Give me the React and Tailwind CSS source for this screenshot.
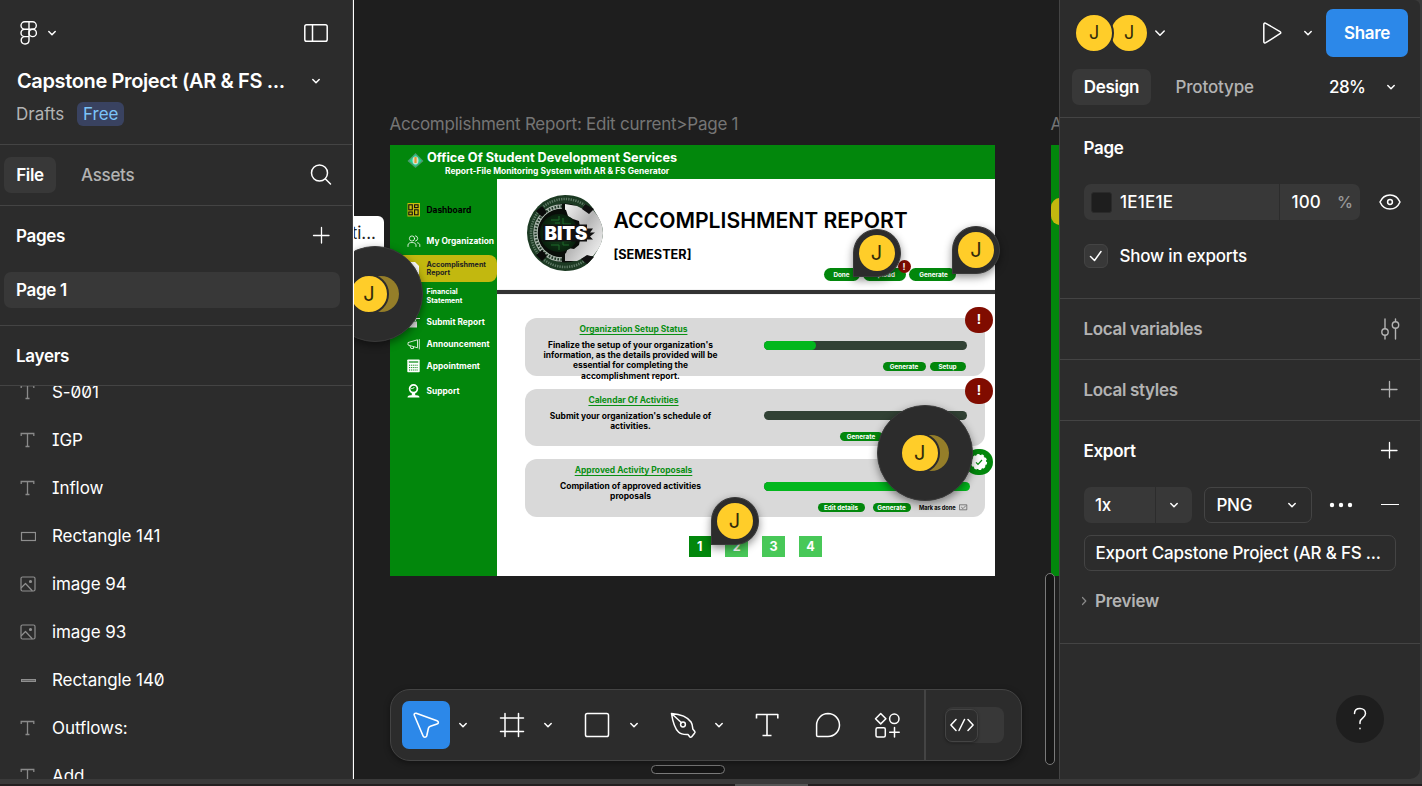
import React from "react";

const Svg = ({ w = 24, h = 24, sw = 1.5, className = "", children }) => (
  <svg
    width={w}
    height={h}
    viewBox={`0 0 ${w} ${h}`}
    fill="none"
    stroke="currentColor"
    strokeWidth={sw}
    strokeLinecap="round"
    strokeLinejoin="round"
    className={`shrink-0 ${className}`}
  >
    {children}
  </svg>
);

const Chevron = ({ className = "" }) => (
  <Svg w={10} h={8} className={className}>
    <path d="M1.8 2.5 5 5.7 8.2 2.5" />
  </Svg>
);

const Plus = ({ className = "" }) => (
  <Svg w={18} h={18} sw={1.3} className={`-mt-[2px] ${className}`}>
    <path d="M9.500 1.500v15.500M1.500 9.500h15.500" />
  </Svg>
);

const TextIcon = () => (
  <Svg w={16} h={16} sw={1.3} className="text-[#8a8a8a]">
    <path d="M1.2 4V1.5h12.6V4M7.5 1.5v13M5.5 14.5h4" strokeLinecap="butt" strokeLinejoin="miter" />
  </Svg>
);

const RectIcon = () => (
  <Svg w={16} h={16} sw={1.2} className="text-[#8f8f8f]">
    <rect x="1.5" y="4.5" width="14" height="8" strokeLinejoin="miter" />
  </Svg>
);

const LineIcon = () => (
  <Svg w={16} h={16} sw={1} className="text-[#8f8f8f]">
    <rect x="1.5" y="7.5" width="14" height="2" fill="#666" strokeLinejoin="miter" />
  </Svg>
);

const ImageIcon = () => (
  <Svg w={16} h={16} sw={1.2} className="text-[#8f8f8f]">
    <rect x="1" y="1" width="14" height="14" rx="1.5" />
    <path d="m1.5 11.5 4-4 6.5 7" />
    <circle cx="10.5" cy="5.5" r="1" fill="currentColor" />
  </Svg>
);

const layers = [
  ["S-001", TextIcon],
  ["IGP", TextIcon],
  ["Inflow", TextIcon],
  ["Rectangle 141", RectIcon],
  ["image 94", ImageIcon],
  ["image 93", ImageIcon],
  ["Rectangle 140", LineIcon],
  ["Outflows:", TextIcon],
  ["Add", TextIcon],
];

function LeftPanel() {
  return (
    <aside className="flex h-full w-[354px] shrink-0 flex-col overflow-hidden border-r border-white bg-[#2c2c2c] text-[17px] leading-[26px] text-white">
      <div className="flex h-full w-[353px] flex-col border-r border-[#444]">
        <div className="flex h-[145px] shrink-0 flex-col border-b border-[#444]">
          <div className="mt-5 flex h-[26px] items-center pl-5 pr-6">
            <Svg w={18} h={26} sw={1.4}>
              <path d="M9 1.800H4.700a3.700 3.700 0 0 0 0 7.400H9zM9 1.800h3.600a3.700 3.700 0 0 1 0 7.400H9zM9 9.200H4.700a3.700 3.700 0 0 0 0 7.400H9zM9 16.600v3.700a3.900 3.700 0 1 1-4.300-3.700z" />
              <circle cx="12.700" cy="12.900" r="3.700" />
            </Svg>
            <Chevron className="ml-[9px]" />
            <Svg w={24} h={18} className="ml-auto">
              <rect x="0.8" y="0.8" width="22.4" height="16.4" rx="1.8" />
              <path d="M8.5 1v16" />
            </Svg>
          </div>
          <div className="mt-[20px] flex h-[30px] items-center pl-[17px] pr-[31px]">
            <span className="whitespace-nowrap text-[20px] font-semibold leading-[30px] tracking-[-0.37px]">Capstone Project (AR &amp; FS ...</span>
            <Chevron className="ml-auto" />
          </div>
          <div className="mt-[6px] flex h-6 items-center pl-4">
            <span className="text-[#b3b3b3]">Drafts</span>
            <span className="ml-[13px] flex h-6 w-[47px] items-center justify-center rounded-[6px] bg-[#394260] text-[#7cc4f8]">Free</span>
          </div>
        </div>
        <div className="flex h-[61px] shrink-0 items-center border-b border-[#444] pl-1 pr-5 font-semibold tracking-[-0.3px]">
          <span className="flex h-9 w-[52px] items-center justify-center rounded-[7px] bg-[#383838]">File</span>
          <span className="ml-[25px] font-medium text-[#b3b3b3]">Assets</span>
          <Svg w={22} h={22} className="ml-auto">
            <circle cx="9.5" cy="9" r="8" />
            <path d="m15.5 15 5 5" />
          </Svg>
        </div>
        <div className="flex h-[120px] shrink-0 flex-col border-b border-[#444] font-semibold tracking-[-0.3px]">
          <div className="flex h-[60px] items-center justify-between pl-4 pr-[22px]">
            <span>Pages</span>
            <Plus />
          </div>
          <div className="ml-1 mt-[6px] flex h-9 w-[336px] items-center rounded-[7px] bg-[#383838] pl-3">Page 1</div>
        </div>
        <div className="flex h-[60px] shrink-0 items-center border-b border-[#444] pl-4 pt-px font-semibold tracking-[-0.3px]">Layers</div>
        <div className="flex min-h-0 flex-1 flex-col overflow-hidden [font-feature-settings:'cv08','zero']">
          <div className="-mt-[18px] flex flex-col">
            {layers.map(([name, Icon]) => (
              <div key={name} className="flex h-12 shrink-0 items-center pl-5">
                <Icon />
                <span className="ml-4 tracking-[-0.07px]">{name}</span>
              </div>
            ))}
          </div>
        </div>
      </div>
    </aside>
  );
}

function BitsLogo() {
  return (
    <svg width="76" height="76" viewBox="0 0 76 76" className="shrink-0">
      <defs>
        <linearGradient id="steel" x1="0" y1="0" x2="1" y2="1">
          <stop offset="0" stopColor="#f4f4f4" />
          <stop offset="0.45" stopColor="#b4b4b4" />
          <stop offset="0.7" stopColor="#d8d8d8" />
          <stop offset="1" stopColor="#fafafa" />
        </linearGradient>
        <radialGradient id="core">
          <stop offset="0" stopColor="#174a1f" />
          <stop offset="1" stopColor="#08200d" />
        </radialGradient>
      </defs>
      <path d="M38 0A38 38 0 0 0 38 76Q56 76 65 64L70 56Q76 46 76 38T70 20L65 12Q56 0 38 0z" fill="#1c3a23" />
      <circle cx="38" cy="38" r="34" fill="none" stroke="#8ba391" strokeWidth="2.6" strokeDasharray="1.3 1.1" opacity="0.6" />
      <circle cx="38" cy="38" r="29.5" fill="#0a0f0b" />
      <path d="M38 9 50 11 60 16 66 15Q76 26 76 38T66 61L60 61 50 66 38 66Z" fill="url(#steel)" />
      <path d="M58 9 67 14 62 19 55 14ZM60 60 67 62 60 69 54 64Z" fill="#101010" />
      <path d="M35 11.500a26.500 26.500 0 0 0 0 53" fill="none" stroke="#aab5ac" strokeWidth="4.500" />
      <path d="M35 11.500a26.500 26.500 0 0 0 0 53" fill="none" stroke="#1d3524" strokeWidth="2.400" strokeDasharray="1.6 1.4" />
      <path d="M36 14a24 24 0 0 0-2 48l5-4 2-5 6 1 5-4 1-5 6-3V34l-6-2-1-6-6-2-5-3-2-6z" fill="#090d09" />
      <circle cx="32" cy="38" r="19" fill="url(#core)" />
      <path d="M24 25h8v-4m4 2v6h8m-20 21h8v5m4-5v-4h8M28 28h5M36 50h6" fill="none" stroke="#1e6a2b" strokeWidth="1" />
      <path d="m9 16 6-5 5 6-5 5zM9 60l6-5 5 6-5 5z" fill="#0a0a0a" />
      <path d="M16 29.500h44v4h6l-3 4h5l-5 4 3 3h-6v2H16z" fill="#111" />
      <text x="17.500" y="44.800" fontFamily="Inter, sans-serif" fontWeight="900" fontSize="18.500" textLength="43" lengthAdjust="spacingAndGlyphs" fill="#fff">
        BITS
      </text>
    </svg>
  );
}

const OrgIcon = () => (
  <Svg w={14} h={14} sw={0.8}>
    <circle cx="5" cy="4.5" r="2.6" />
    <path d="M1 12.5V11c0-1.5 1.5-2.5 4-2.5S9 9.500 9 11v1.500M8.500 1.800a2.700 2.700 0 0 1 0 5.300M10.500 8.800c1.500.3 2.300 1.200 2.300 2.200v1.500" />
  </Svg>
);
const DashIcon = () => (
  <svg width="13" height="14" viewBox="0 0 13 14" className="shrink-0">
    <rect width="12.500" height="13.500" x="0.500" fill="#c9bd0d" />
    <g fill="none" stroke="#111" strokeWidth="1.1">
      <rect x="1.800" y="1.800" width="3.500" height="5" />
      <rect x="7.600" y="1.800" width="3.500" height="2.800" />
      <rect x="1.800" y="9" width="3.500" height="2.800" />
      <rect x="7.600" y="6.800" width="3.500" height="5" />
    </g>
  </svg>
);
const PageIcon = () => (
  <svg width="13" height="15" viewBox="0 0 13 15" className="shrink-0">
    <path d="M1 1h7l4 4v9H1z" fill="#fff" />
  </svg>
);
const SubmitIcon = () => (
  <svg width="13" height="14" viewBox="0 0 13 14" className="shrink-0">
    <path d="M1 6.500h9v6H1z" fill="#e8e8e8" />
    <path d="m8 6 1-2.500h4" stroke="#fff" strokeWidth="1.100" fill="none" />
  </svg>
);
const HornIcon = () => (
  <Svg w={13} h={12} sw={0.8}>
    <path d="M1 5v2l9.500 2.800V2.200zM3 8l1 2.500h2.500V9M12.300 1.500v9.500" />
  </Svg>
);
const CalcIcon = () => (
  <svg width="13" height="14" viewBox="0 0 13 14" className="shrink-0">
    <rect x="0.300" y="0.500" width="12.400" height="12.800" rx="0.800" fill="#fff" />
    <path d="M1.800 3h9.400" stroke="#02870c" strokeWidth="1.200" />
    <path d="M2 6.200h9M2 8.600h9M2 11h9" stroke="#02870c" strokeWidth="1" strokeDasharray="1.200 0.900" />
  </svg>
);
const SupportIcon = () => (
  <svg width="13" height="14" viewBox="0 0 13 14" className="shrink-0">
    <circle cx="6.500" cy="4.800" r="3.900" fill="none" stroke="#fff" strokeWidth="1.700" />
    <path d="M4.200 4.600c1.800 0 2.600-.6 3.400-1.600" stroke="#fff" strokeWidth="0.900" fill="none" />
    <path d="M4.800 8.500h3.400v3H4.800z" fill="#fff" />
    <path d="M0.500 13.500c0-2 2-2.600 6-2.600s6 .6 6 2.600z" fill="#fff" />
  </svg>
);

const nav = [
  { t: ["Dashboard"], icon: DashIcon, cls: "mt-[20.500px] h-[21px] text-black text-[8.4px]" },
  { t: ["My Organization"], icon: OrgIcon, cls: "mt-[10px] h-[21px] text-[8.4px]" },
  { t: ["Accomplishment", "Report"], icon: PageIcon, cls: "mt-[3.500px] h-[27px] bg-[#c2b80f] rounded-r-[8px] text-[#222] text-[7.2px]" },
  { t: ["Financial", "Statement"], icon: PageIcon, cls: "mt-[4px] h-[20px] text-[7.1px]" },
  { t: ["Submit Report"], icon: SubmitIcon, cls: "mt-[5.500px] h-[20px] text-[8.4px]" },
  { t: ["Announcement"], icon: HornIcon, cls: "mt-[2px] h-[20px] text-[8.4px]" },
  { t: ["Appointment"], icon: CalcIcon, cls: "mt-[2px] h-[20px] text-[8.4px]" },
  { t: ["Support"], icon: SupportIcon, cls: "mt-[5px] h-[20px] text-[8.4px]" },
];

const Pill = ({ className = "h-[9px]", children }) => (
  <span className={`flex items-center justify-center rounded-full bg-[#02870c] text-[6.3px] font-bold leading-[10px] text-white ${className}`}>{children}</span>
);

const Alert = () => (
  <span className="absolute -right-[8px] -top-[11px] flex h-[26px] w-[28px] items-center justify-center rounded-full bg-[#800c00] text-[13px] font-bold text-white">!</span>
);

function StatusCard({ title, body, fill, badge, className = "", children }) {
  return (
    <div className={`relative ml-[28px] flex h-[57.500px] w-[460px] shrink-0 rounded-[12px] bg-[#d9d9d9] ${className}`}>
      <div className="flex w-[217px] flex-col items-center font-bold">
        <span className="mt-[6px] text-[8.45px] leading-[10px] text-[#0a8f14] underline underline-offset-[1.500px]">{title}</span>
        <div className="-ml-[6px] mt-[6px] flex flex-col items-center text-[8.45px] leading-[10.200px] text-black">
          {body.map((l) => (
            <span key={l} className="whitespace-nowrap">{l}</span>
          ))}
        </div>
      </div>
      <div className="ml-[21.500px] w-[206px] pt-[22.500px]">
        <div className="h-[9px] w-[203px] rounded-full bg-[#314134]">
          <div className={`h-[9px] rounded-full bg-[#02b71d] ${fill}`} />
        </div>
        <div className="mt-[12px] flex items-center">{children}</div>
      </div>
      {badge}
    </div>
  );
}

const pages = [
  ["1", "bg-[#02870c]"],
  ["2", "bg-[#48c858]"],
  ["3", "bg-[#48c858]"],
  ["4", "bg-[#48c858]"],
];

function DesignFrame() {
  return (
    <div className="absolute left-[36px] top-[145px] flex h-[431px] w-[605px] flex-col overflow-hidden whitespace-nowrap bg-white">
      <header className="flex h-[34px] shrink-0 bg-[#02870c] text-white">
        <svg width="17" height="16" viewBox="0 0 17 16" className="ml-[17px] mt-[8px] shrink-0">
          <path d="m8.500 0 8 8-8 7-8-7z" fill="#4d9a70" />
          <path d="m8.500 1.500 6 6.300-6 5.700-6-5.700z" fill="#19d890" />
          <ellipse cx="8.500" cy="7.500" rx="3" ry="4" fill="#cfe0cf" />
          <path d="M8.500 4v6" stroke="#e59a2c" strokeWidth="2.200" />
        </svg>
        <div className="ml-[3px] flex flex-col">
          <span className="mt-[5px] text-[12.680px] font-bold leading-[16px]">Office Of Student Development Services</span>
          <span className="ml-[18px] text-[8.48px] font-bold leading-[11px]">Report-File Monitoring System with AR &amp; FS Generator</span>
        </div>
      </header>
      <div className="flex min-h-0 flex-1">
        <nav className="flex w-[107px] shrink-0 flex-col bg-[#02870c] font-bold text-white">
          {nav.map(({ t, icon: Icon, cls }) => (
            <div key={t[0]} className={`flex shrink-0 items-center pl-[17px] ${cls}`}>
              <span className="flex w-[19.500px] shrink-0">
                <Icon />
              </span>
              <span className="flex flex-col pt-[1.200px] leading-[8.600px]">
                {t.map((x) => (
                  <span key={x}>{x}</span>
                ))}
              </span>
            </div>
          ))}
        </nav>
        <main className="flex min-w-0 flex-1 flex-col">
          <section className="flex h-[111px] shrink-0 pl-[30px] text-black">
            <div className="mt-[16px]">
              <BitsLogo />
            </div>
            <div className="ml-[10.500px] flex flex-col">
              <h1 className="mt-[28px] text-[21.150px] font-semibold leading-[28px]">ACCOMPLISHMENT REPORT</h1>
              <p className="mt-[12px] text-[12.700px] font-bold leading-[16px]">[SEMESTER]</p>
              <div className="ml-[210px] mt-[5px] flex gap-[3px]">
                <Pill className="h-[13px] w-[36px]">Done</Pill>
                <Pill className="relative h-[13px] w-[43px]">
                  Upload
                  <span className="absolute -right-[5px] -top-[8px] flex size-[13px] items-center justify-center rounded-full bg-[#800c00] text-[9px]">!</span>
                </Pill>
                <Pill className="h-[13px] w-[47px] pl-[3px]">Generate</Pill>
              </div>
            </div>
          </section>
          <div className="h-[4px] shrink-0 bg-[#333] shadow-[0_0_1px_#888]" />
          <StatusCard
            className="mt-[24px]"
            title="Organization Setup Status"
            body={["Finalize the setup of your organization's", "information, as the details provided will be", "essential for completing the", "accomplishment report."]}
            fill="w-[52px]"
            badge={<Alert />}
          >
            <Pill className="ml-[119px] h-[9px] w-[43px] pt-[1.500px]">Generate</Pill>
            <Pill className="ml-[4px] h-[9px] w-[36px] pt-[1.500px]">Setup</Pill>
          </StatusCard>
          <StatusCard
            className="mt-[13px]"
            title="Calendar Of Activities"
            body={["Submit your organization's schedule of", "activities."]}
            fill="w-0"
            badge={<Alert />}
          >
            <Pill className="ml-[76px] h-[9px] w-[43px] pt-[1px]">Generate</Pill>
          </StatusCard>
          <StatusCard
            className="mt-[13px]"
            title="Approved Activity Proposals"
            body={["Compilation of approved activities", "proposals"]}
            fill="w-[206px]"
            badge={
              <span className="absolute -right-[8px] -top-[10px] flex h-[26px] w-[28px] items-center justify-center rounded-full bg-[#02870c]">
                <svg width="18" height="18" viewBox="0 0 18 18">
                  <circle cx="9" cy="9" r="7.300" fill="#fff" stroke="#fff" strokeWidth="1.600" strokeDasharray="2.600 1.980" />
                  <path d="m6 9.300 2 2 4-4.300" fill="none" stroke="#02870c" strokeWidth="1.200" />
                </svg>
              </span>
            }
          >
            <Pill className="ml-[54px] h-[9px] w-[47px] pt-[1.500px]">Edit details</Pill>
            <Pill className="ml-[8px] h-[9px] w-[38px] pt-[1.500px]">Generate</Pill>
            <span className="ml-[8.500px] text-[5.700px] font-bold leading-[9px] tracking-[-0.080px] text-black">Mark as done</span>
            <Svg w={9} h={7} sw={0.7} className="ml-[3px] text-[#555]">
              <rect x="0.800" y="0.800" width="7" height="5" />
              <path d="M2.500 3.300 4 4.600 6.500 2" />
            </Svg>
          </StatusCard>
          <div className="ml-[191.500px] mt-[19px] flex gap-[14.700px]">
            {pages.map(([n, bg]) => (
              <span key={n} className={`flex h-[21px] w-[22.300px] items-center justify-center pt-[2px] text-[12.600px] font-bold text-white ${bg}`}>{n}</span>
            ))}
          </div>
        </main>
      </div>
    </div>
  );
}

const CommentPin = ({ className }) => (
  <div className={`absolute flex size-12 items-center justify-center rounded-full rounded-bl-[2px] border border-[#3a3a3a] bg-[#2c2c2c] shadow-[0_3px_8px_rgba(0,0,0,0.45)] ${className}`}>
    <span className="flex size-9 items-center justify-center rounded-full bg-[#ffcd29] text-[20px] text-[#332b0a]">J</span>
  </div>
);

const CommentCluster = ({ className }) => (
  <div className={`absolute flex size-[96px] items-center rounded-full border border-[#3a3a3a] bg-[#2c2c2c] pl-[21.500px] shadow-[0_3px_8px_rgba(0,0,0,0.45)] ${className}`}>
    <span className="z-10 flex size-[40px] shrink-0 items-center justify-center rounded-full border-2 border-[#2c2c2c] bg-[#ffcd29] text-[20px] text-[#332b0a]">J</span>
    <span className="-ml-[26.500px] size-9 shrink-0 rounded-full bg-[#957e29]" />
  </div>
);

function Toolbar() {
  return (
    <div className="absolute left-[36px] top-[689px] flex h-[72px] w-[632px] items-center rounded-[20px] border border-[#444] bg-[#2c2c2c] pl-[11px] text-white shadow-[0_2px_6px_rgba(0,0,0,0.4)]">
      <span className="flex size-12 shrink-0 items-center justify-center rounded-[7px] bg-[#2c88e9]">
        <Svg w={28} h={28} sw={1.6}>
          <path d="M4.200 2.300 25 9.800c1.800.7 1.800 2.800 0 3.300l-6.600 2.200c-1 .4-1.700 1-2 2L14.700 25c-.7 1.600-3 1.600-3.600 0L2.300 4.300C1.800 3 2.900 1.900 4.200 2.300z" />
        </Svg>
      </span>
      <Chevron className="ml-[8px]" />
      <Svg w={26} h={26} className="ml-[31px]">
        <path d="M6 1.500v23M19.500 1.500v23M1.500 6h23M1.500 19.500h23" />
      </Svg>
      <Chevron className="ml-[18px]" />
      <Svg w={26} h={26} className="ml-[31px]">
        <rect x="1.500" y="1.500" width="23" height="23" rx="1.800" />
      </Svg>
      <Chevron className="ml-[19px]" />
      <Svg w={28} h={28} className="ml-[30px]">
        <path d="M2.500 2.500 12.500 11.800M2.500 2.500C9 3 17.500 4.500 22 11c1.500 2.300 1.500 4.500 1.800 7l2 2.500c.5.600 0 1.500-.5 2L22.500 26c-.6.500-1.400.4-1.800-.2L19 23.500c-4 .2-7 0-9.500-2.500C4.500 16 3.500 9 2.500 2.500z" />
        <circle cx="14" cy="13.500" r="2.400" />
      </Svg>
      <Chevron className="ml-[17px]" />
      <Svg w={26} h={26} sw={1.6} className="ml-[30px]">
        <path d="M2.500 6.500v-4h21.300v4M13 2.500v21M8.500 23.500h9" strokeLinecap="butt" />
      </Svg>
      <Svg w={26} h={26} className="ml-[35px]">
        <path d="M13 1.500a11.500 11.500 0 1 1 0 23H2.800a1.200 1.200 0 0 1-1.200-1.200V13A11.500 11.500 0 0 1 13 1.500z" />
      </Svg>
      <Svg w={26} h={26} className="ml-[33px]">
        <path d="m6.700 1.500 5.200 5.200-5.200 5.200-5.200-5.200zM20.500 15.500v9.500M15.700 20.300h9.500" />
        <circle cx="20.300" cy="6.800" r="4.700" />
        <rect x="2" y="15.700" width="9.300" height="9.300" rx="1.500" />
      </Svg>
      <span className="ml-[24px] h-full w-[2px] bg-[#444]" />
      <span className="ml-[19px] flex h-9 w-[59px] items-center rounded-[8px] bg-[#383838]">
        <span className="flex size-[33px] items-center justify-center rounded-[7px] border border-[#444] bg-[#2c2c2c] shadow-[0_1px_3px_rgba(0,0,0,0.4)]">
          <Svg w={24} h={16}>
            <path d="M6 2.500.9 8 6 13.500M18 2.500 23.100 8 18 13.500M14.500 2.500l-5.500 11" />
          </Svg>
        </span>
      </span>
    </div>
  );
}

function Canvas() {
  return (
    <div className="relative h-full min-w-0 flex-1 overflow-hidden bg-[#1e1e1e]">
      <span className="absolute left-[35.500px] top-[113px] whitespace-nowrap text-[17px] leading-[23px] tracking-[-0.245px] text-[#757575]">Accomplishment Report: Edit current&gt;Page 1</span>
      <span className="absolute left-[696.500px] top-[113px] text-[17px] leading-[23px] text-[#757575]">A</span>
      <div className="absolute left-[697px] top-[145px] h-[431px] w-[20px] bg-[#02870c] pt-[53px]">
        <div className="h-[27px] rounded-l-[9px] bg-[#c2b80f]" />
      </div>
      <DesignFrame />
      <div className="absolute -left-[20px] top-[216px] flex h-[40px] w-[50px] items-start justify-end rounded-[6px] bg-white pr-[8px] pt-[6px] text-[17px] leading-[22px] text-[#222]">ti...</div>
      <CommentCluster className="-left-[27.500px] top-[245.500px]" />
      <CommentPin className="left-[498.500px] top-[228.500px]" />
      <CommentPin className="left-[598px] top-[226px]" />
      <CommentPin className="left-[356.500px] top-[497px]" />
      <CommentCluster className="left-[523.300px] top-[404.500px]" />
      <span className="absolute left-[691px] top-[573px] h-[192px] w-[9.500px] rounded-full border-[1px] border-[#7a7a7a] bg-[#151515]" />
      <span className="absolute left-[297px] top-[765px] h-[9px] w-[74px] rounded-full border-[1px] border-[#7a7a7a] bg-[#151515]" />
      <Toolbar />
    </div>
  );
}

function RightPanel() {
  return (
    <aside className="flex h-full w-[363px] shrink-0 bg-[#3a3a3a]">
      <div className="relative flex w-[361px] flex-col rounded-br-[10px] rounded-tr-[6px] border-l border-[#444] bg-[#2c2c2c] text-[17px] font-semibold leading-[26px] tracking-[-0.3px] text-white">
        <div className="flex h-[118px] shrink-0 flex-col border-b border-[#444]">
          <div className="mt-[9px] flex h-12 items-center pl-4 pr-3">
            <span className="z-10 -mx-[2px] flex size-10 items-center justify-center rounded-full border-2 border-[#2c2c2c] bg-[#ffcd29] text-[18px] font-normal text-[#332b0a]">J</span>
            <span className="-ml-px flex size-9 items-center justify-center rounded-full bg-[#ffcd29] text-[18px] font-normal text-[#332b0a]">J</span>
            <Svg w={12} h={8} className="ml-[7px]">
              <path d="M1.800 2 6 6.200 10.200 2" />
            </Svg>
            <Svg w={20} h={22} className="ml-auto">
              <path d="M1.800 2.500c0-1.200 1-1.700 2-1.200l14.200 8.300c1 .6 1 1.500 0 2.100l-14.200 9c-1 .6-2 0-2-1.200z" />
            </Svg>
            <Chevron className="ml-[21px] mr-[13px]" />
            <span className="flex h-12 w-[82px] items-center justify-center rounded-[7px] bg-[#2c88e9]">Share</span>
          </div>
          <div className="mt-3 flex h-9 items-center pl-3 pr-6">
            <span className="flex h-9 w-[79px] items-center justify-center rounded-[7px] bg-[#383838]">Design</span>
            <span className="ml-[24.500px] font-medium tracking-[-0.15px] text-[#b3b3b3]">Prototype</span>
            <span className="ml-auto font-medium tracking-[-0.5px]">28%</span>
            <Chevron className="ml-[20.500px]" />
          </div>
        </div>
        <div className="flex h-[181px] shrink-0 flex-col border-b border-[#444] pl-[23.500px]">
          <div className="flex h-[60px] items-center">Page</div>
          <div className="ml-[0.500px] mt-[6px] flex h-9 items-center font-medium tracking-[-0.2px]">
            <div className="flex h-9 w-[276px] items-center rounded-[7px] bg-[#383838]">
              <span className="ml-[7px] size-[21px] rounded-[3px] border border-[#2a2a2a] bg-[#1e1e1e]" />
              <span className="ml-2 w-[159px] tracking-[0.2px]">1E1E1E</span>
              <span className="h-9 w-px bg-[#2c2c2c]" />
              <span className="ml-[11.500px] w-[45.500px] tracking-[0.1px]">100</span>
              <span className="text-[16px] text-[#9a9a9a]">%</span>
            </div>
            <Svg w={22} h={16} className="ml-[19px]">
              <path d="M1 8c2-4.500 5.700-7 10-7s8 2.500 10 7c-2 4.500-5.700 7-10 7S3 12.500 1 8z" />
              <circle cx="11" cy="8" r="2.400" />
            </Svg>
          </div>
          <div className="ml-[0.500px] mt-6 flex h-6 items-center font-medium tracking-[-0.2px]">
            <span className="flex size-6 items-center justify-center rounded-[6px] border border-[#444] bg-[#383838]">
              <Svg w={14} h={12}>
                <path d="m1.500 6.500 4 4 6.500-9" />
              </Svg>
            </span>
            <span className="ml-[11.500px]">Show in exports</span>
          </div>
        </div>
        <div className="flex h-[61px] shrink-0 items-center justify-between border-b border-[#444] pl-[23.500px] pr-[20px] text-[#b3b3b3]">
          <span className="tracking-[-0.330px]">Local variables</span>
          <Svg w={20} h={22} sw={1.4}>
            <path d="M5 1v9.500M5 17.500V21M15.500 1v2.500M15.500 10.500V21" />
            <circle cx="5" cy="14" r="3.200" />
            <circle cx="15.500" cy="7" r="3.200" />
          </Svg>
        </div>
        <div className="flex h-[61px] shrink-0 items-center justify-between border-b border-[#444] pl-[23.500px] pr-[22px] text-[#b3b3b3]">
          <span className="tracking-[-0.330px]">Local styles</span>
          <Plus />
        </div>
        <div className="flex h-[223px] shrink-0 flex-col border-b border-[#444] pl-6">
          <div className="-ml-[0.500px] flex h-[60px] items-center justify-between pr-[22px]">
            <span>Export</span>
            <Plus />
          </div>
          <div className="mt-[6px] flex h-9 items-center font-medium">
            <span className="flex h-9 w-[71px] items-center rounded-l-[7px] bg-[#383838] pl-[11px]">1x</span>
            <span className="ml-px flex h-9 w-9 items-center justify-center rounded-r-[7px] bg-[#383838]">
              <Chevron />
            </span>
            <span className="ml-3 flex h-9 w-[108px] items-center justify-between rounded-[7px] border border-[#444] pl-[11.500px] pr-[14px]">
              PNG
              <Chevron />
            </span>
            <svg width="24" height="6" viewBox="0 0 24 6" fill="currentColor" className="ml-[17px]">
              <circle cx="3" cy="3" r="2.200" />
              <circle cx="12" cy="3" r="2.200" />
              <circle cx="21" cy="3" r="2.200" />
            </svg>
            <span className="-mt-px ml-[28px] h-px w-[18px] bg-white" />
          </div>
          <div className="mt-3 flex h-9 w-[312px] items-center whitespace-nowrap rounded-[7px] border border-[#444] pl-[10.500px] font-medium tracking-[-0.2px]">Export Capstone Project (AR &amp; FS ...</div>
          <div className="mt-[18px] flex h-6 items-center text-[#b3b3b3]">
            <Svg w={6} h={10} sw={1.2} className="-ml-[3px] mr-[8px] text-[#8a8a8a]">
              <path d="M1.500 1.500 4.800 5 1.500 8.500" />
            </Svg>
            <span className="tracking-[-0.2px]">Preview</span>
          </div>
        </div>
        <div className="absolute bottom-9 right-9 flex size-12 items-center justify-center rounded-full bg-[#1e1e1e]">
          <Svg w={16} h={26} sw={1.5}>
            <path d="M2.500 7.500C2.500 4 5 2.500 8 2.500s5.500 2 5.500 5c0 4.500-5.500 4.500-5.500 8.500v1.500M8 22.300v.4" />
          </Svg>
        </div>
      </div>
    </aside>
  );
}

export default function App() {
  return (
    <div className="flex h-[786px] w-[1422px] flex-col overflow-hidden bg-[#3a3a3a] font-['Inter',sans-serif]">
      <div className="flex h-[779px] shrink-0">
        <LeftPanel />
        <Canvas />
        <RightPanel />
      </div>
      <div className="h-[5px] shrink-0 bg-[#3a3a3a]" />
      <div className="flex h-[2px] shrink-0 bg-[#231f20]">
        <div className="ml-[735px] h-full w-[73px] bg-[#555]" />
      </div>
    </div>
  );
}
